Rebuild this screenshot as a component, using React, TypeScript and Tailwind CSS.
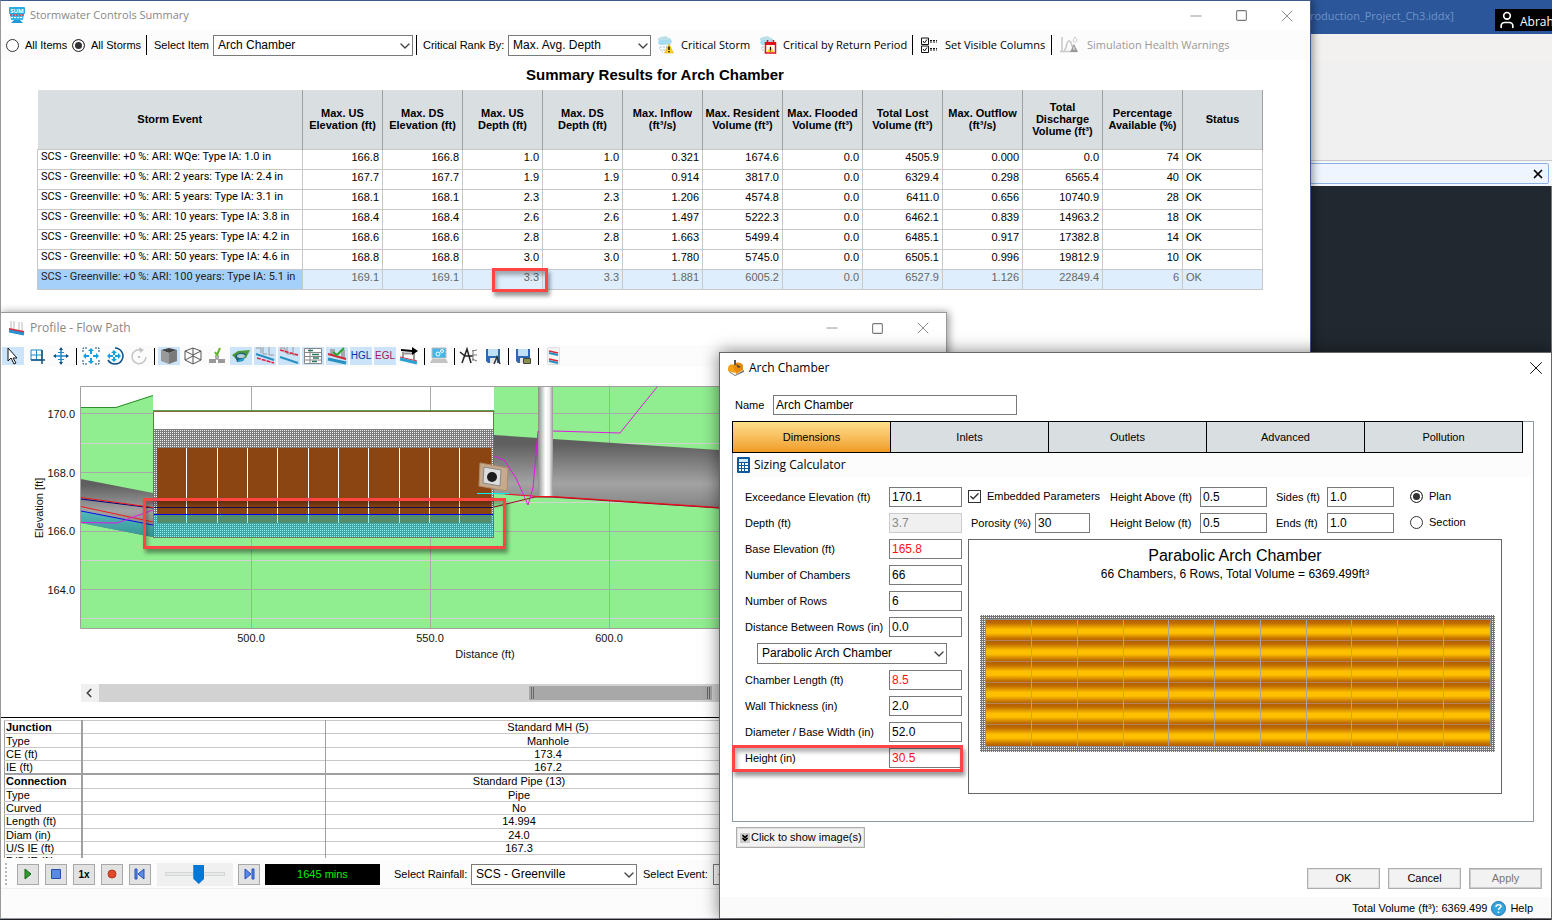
import { ReactNode } from "react";
import { Check, ChevronDown, ChevronLeft, ChevronsDown, Minus, Square, User, X } from "lucide-react";

const columns = [
  "Storm Event",
  "Max. US Elevation (ft)",
  "Max. DS Elevation (ft)",
  "Max. US Depth (ft)",
  "Max. DS Depth (ft)",
  "Max. Inflow (ft³/s)",
  "Max. Resident Volume (ft³)",
  "Max. Flooded Volume (ft³)",
  "Total Lost Volume (ft³)",
  "Max. Outflow (ft³/s)",
  "Total Discharge Volume (ft³)",
  "Percentage Available (%)",
  "Status",
];

const storms = [
  ["SCS - Greenville: +0 %: ARI: WQe: Type IA: 1.0 in", "166.8", "166.8", "1.0", "1.0", "0.321", "1674.6", "0.0", "4505.9", "0.000", "0.0", "74", "OK"],
  ["SCS - Greenville: +0 %: ARI: 2 years: Type IA: 2.4 in", "167.7", "167.7", "1.9", "1.9", "0.914", "3817.0", "0.0", "6329.4", "0.298", "6565.4", "40", "OK"],
  ["SCS - Greenville: +0 %: ARI: 5 years: Type IA: 3.1 in", "168.1", "168.1", "2.3", "2.3", "1.206", "4574.8", "0.0", "6411.0", "0.656", "10740.9", "28", "OK"],
  ["SCS - Greenville: +0 %: ARI: 10 years: Type IA: 3.8 in", "168.4", "168.4", "2.6", "2.6", "1.497", "5222.3", "0.0", "6462.1", "0.839", "14963.2", "18", "OK"],
  ["SCS - Greenville: +0 %: ARI: 25 years: Type IA: 4.2 in", "168.6", "168.6", "2.8", "2.8", "1.663", "5499.4", "0.0", "6485.1", "0.917", "17382.8", "14", "OK"],
  ["SCS - Greenville: +0 %: ARI: 50 years: Type IA: 4.6 in", "168.8", "168.8", "3.0", "3.0", "1.780", "5745.0", "0.0", "6505.1", "0.996", "19812.9", "10", "OK"],
  ["SCS - Greenville: +0 %: ARI: 100 years: Type IA: 5.1 in", "169.1", "169.1", "3.3", "3.3", "1.881", "6005.2", "0.0", "6527.9", "1.126", "22849.4", "6", "OK"],
];

const profileRows = [
  { label: "Junction", value: "Standard MH (5)", head: true, junction: true },
  { label: "Type", value: "Manhole", junction: true },
  { label: "CE (ft)", value: "173.4", junction: true },
  { label: "IE (ft)", value: "167.2", junction: true },
  { label: "Connection", value: "Standard Pipe (13)", head: true },
  { label: "Type", value: "Pipe" },
  { label: "Curved", value: "No" },
  { label: "Length (ft)", value: "14.994" },
  { label: "Diam (in)", value: "24.0" },
  { label: "U/S IE (ft)", value: "167.3" },
  { label: "D/S IE (ft)", value: "" },
];

function WindowButtons() {
  return (
    <div className="flex items-center text-[#777]">
      <button aria-label="Minimize" className="flex w-[46px] justify-center"><Minus size={18} strokeWidth={1} /></button>
      <button aria-label="Maximize" className="flex w-[45px] justify-center"><Square size={13} strokeWidth={2} /></button>
      <button aria-label="Close" className="flex w-[46px] justify-center"><X size={20} strokeWidth={1} /></button>
    </div>
  );
}

function Select({ id, value, className }: { id: string; value: string; className: string }) {
  return (
    <div className={`relative shrink-0 ${className}`}>
      <select id={id} className="block h-[21px] w-full appearance-none border border-[#7a7a7a] bg-white pb-px pl-1 text-[12px] leading-[18px]">
        <option>{value}</option>
      </select>
      <ChevronDown size={16} strokeWidth={2} className="pointer-events-none absolute top-[3px] right-0 text-[#444]" />
    </div>
  );
}

function Radio({ id, name, checked }: { id: string; name: string; checked?: boolean }) {
  return (
    <input
      type="radio"
      id={id}
      name={name}
      defaultChecked={checked}
      className="size-[13px] shrink-0 appearance-none rounded-full border border-[#333] bg-white checked:bg-[#333] checked:shadow-[inset_0_0_0_2px_white]"
    />
  );
}

function Separator() {
  return <div className="h-5 w-px shrink-0 bg-black" />;
}

// Red annotation frame
function Marker({ className }: { className: string }) {
  return (
    <div className={`pointer-events-none absolute border-[3px] border-[#ff4444] shadow-[2px_4px_4px_rgba(0,0,0,0.4),inset_2px_4px_4px_rgba(0,0,0,0.3)] ${className}`} />
  );
}

function StormIcon({ calendar }: { calendar?: boolean }) {
  return (
    <svg width="18" height="18" viewBox="0 0 18 18" className="shrink-0">
      <path d="M3 9a3 3 0 0 1 0-5.5 5 5 0 0 1 8-1.5 3.5 3.5 0 0 1 2 6.5z" fill="#a5dcf2" />
      <path d="M1 4a6 3 0 0 1 11-2l1 2z" fill="#bcdfe8" />
      <path d="M4 10v5M7 10v6M9.5 10v4M2 12h1M5 16h1" stroke="#a9c4cd" strokeDasharray="2 1" />
      {calendar ? (
        <>
          <path d="M6.500 7h10v10h-10z" fill="#fff" stroke="#e01018" strokeWidth="1.500" />
          <path d="M6 6h11v3H6z" fill="#e01018" />
          <path d="M8.500 4v3M14.500 4v3" stroke="#e01018" strokeWidth="1.500" />
          <path d="M11.500 9.500l3.500 6.500H8z" fill="#ffd21f" />
          <path d="M11.500 11v3M11.500 14.500v1" stroke="#111" />
        </>
      ) : (
        <>
          <path d="M12 8l4.500 9h-9z" fill="#ffd21f" stroke="#e2a400" strokeWidth=".5" />
          <path d="M12 10.500v3.500M12 15v1.200" stroke="#111" strokeWidth="1.500" />
        </>
      )}
    </svg>
  );
}

function ColumnsIcon() {
  return (
    <svg width="17" height="17" viewBox="0 0 17 17" fill="none" stroke="#111" className="shrink-0">
      <path d="M.5 1h7v6.500h-7zM.5 9h7v6.500h-7z" />
      <path d="M2 4l1.500 2L6 2.500M2 12l1.500 2L6 10.500" />
      <path d="M9 3.500h7M9 5h7M9 11.500h7M9 13h7" strokeDasharray="2 1" />
    </svg>
  );
}

function HealthIcon() {
  return (
    <svg width="19" height="18" viewBox="0 0 19 18" fill="none" stroke="#c8c8c8" className="shrink-0">
      <path d="M2 1v15M0 15.500h17M4 14c3 0 2-9 5-9s2 4 4 7" strokeWidth="1.500" />
      <path d="M15 1c-3 4-2 5 0 5s3-1 0-5z" />
      <path d="M14 8l4 8h-8z" fill="#999" stroke="none" />
      <path d="M14 11v3" stroke="#fff" />
    </svg>
  );
}

function SummaryWindow() {
  return (
    <section className="absolute top-0 right-[241px] left-0 h-[400px] border border-[#3c5a8c] border-l-[#999] bg-white shadow-[2px_0_8px_rgba(0,0,0,0.4)]">
      <header className="flex h-[29px] items-center justify-between pl-2 font-['Open_Sans',sans-serif] text-[11px] text-[#888]">
        <div className="flex items-center gap-[5px]">
          <svg width="16" height="17" viewBox="0 0 16 17">
            <rect width="16" height="7" rx="1" fill="#29abe2" />
            <text x="8" y="6" fontSize="6" fontWeight="bold" textAnchor="middle" fill="#fff">SUM</text>
            <path d="M1 7h14l-1 6H2z" fill="#3ab6e8" />
            <path d="M1 8h14" stroke="#d8474a" strokeDasharray="2 1" strokeWidth="1.500" />
            <path d="M2 10.500h12" stroke="#fff" strokeDasharray="2 1" />
            <path d="M2 16l3-3h6l3 3z" fill="#1f9bd7" />
          </svg>
          Stormwater Controls Summary
        </div>
        <WindowButtons />
      </header>

      <div className="flex h-[30px] items-center bg-[#fcfcfc] pl-[5px] text-[11px] whitespace-nowrap">
        <Radio id="all-items" name="scope" />
        <label htmlFor="all-items" className="ml-[6px] w-[47px]">All Items</label>
        <Radio id="all-storms" name="scope" checked />
        <label htmlFor="all-storms" className="ml-[6px] w-[55px]">All Storms</label>
        <Separator />
        <label htmlFor="item" className="ml-[7px] w-[59px]">Select Item</label>
        <Select id="item" value="Arch Chamber" className="mr-[3px] w-[200px]" />
        <Separator />
        <label htmlFor="rank" className="ml-[6px] w-[85px]">Critical Rank By:</label>
        <Select id="rank" value="Max. Avg. Depth" className="mr-[6px] w-[143px]" />
        <div className="flex items-center font-['Open_Sans',sans-serif] text-[11px]">
          <button className="flex w-[102px] items-center gap-[6px]"><StormIcon />Critical Storm</button>
          <button className="flex w-[153px] items-center gap-[6px]"><StormIcon calendar />Critical by Return Period</button>
          <Separator />
          <button className="ml-2 flex w-[130px] items-center gap-[7px]"><ColumnsIcon />Set Visible Columns</button>
          <Separator />
          <button disabled className="ml-2 flex items-center gap-2 text-[#999]"><HealthIcon />Simulation Health Warnings</button>
        </div>
      </div>

      <h1 className="flex h-[30px] items-center justify-center pr-[1px] text-[15px] font-bold">Summary Results for Arch Chamber</h1>

      <div className="pr-[47px] pl-9">
        <table className="w-full table-fixed border-collapse text-[11px]">
          <thead>
            <tr className="h-[59px] bg-[#d9dee1]">
              {columns.map((name, i) => (
                <th key={name} className={`border-r border-[#a0a0a0] leading-3 ${i === 0 ? "w-[265px]" : ""} ${i === 6 ? "px-0" : "px-1"}`}>{name}</th>
              ))}
            </tr>
          </thead>
          <tbody>
            {storms.map((row, r) => (
              <tr key={row[0]} className={`h-5 ${r === 6 ? "bg-[#deeefc] text-[#666]" : ""}`}>
                {row.map((cell, i) => (
                  <td
                    key={i}
                    className={`border border-[#c8c8c8] px-[3px] pb-1 leading-[14px] whitespace-nowrap ${i > 0 && i < 12 ? "text-right" : "text-left"} ${i === 0 ? "font-['Roboto',sans-serif]" : ""} ${i === 0 && r === 6 ? "bg-[#a5d0fa] text-[#222]" : ""}`}
                  >
                    {cell}
                  </td>
                ))}
              </tr>
            ))}
          </tbody>
        </table>
      </div>
      <Marker className="top-[267px] left-[491px] h-[24px] w-[56px]" />
    </section>
  );
}

function Tool({ label, active, children }: { label: string; active?: boolean; children: ReactNode }) {
  return (
    <button aria-label={label} className="flex h-[18px] w-6 shrink-0 justify-center">
      <span className={`flex h-[18px] w-[22px] items-center justify-center overflow-hidden ${active ? "bg-[#cce4f9]" : ""}`}>{children}</span>
    </button>
  );
}

function Icon({ children }: { children: ReactNode }) {
  return <svg width="20" height="18" viewBox="0 0 20 18" fill="none">{children}</svg>;
}

function ToolGap() {
  return (
    <div className="flex w-[6px] shrink-0 justify-center">
      <div className="h-[17px] w-px bg-black" />
    </div>
  );
}

// Manholes joined by a pipe, used by several of the profile tools
function PipeGlyph({ pipe, red }: { pipe: string; red: string }) {
  return (
    <Icon>
      <path d="M1 1h5v5M8 0v7h4M14 0v8h5" stroke="#999" />
      <path d={pipe} stroke="#2790bf" strokeWidth="2" />
      <path d={red} stroke="#e0203a" strokeWidth="1.500" strokeDasharray="4 1" />
    </Icon>
  );
}

function SaveGlyph({ children }: { children: ReactNode }) {
  return (
    <Icon>
      <path d="M3 2h14v14H5l-2-2z" fill="#2f67b1" />
      <path d="M5 2h10v7H5z" fill="#bfe0f5" />
      <path d="M7 11h7v5H7z" fill="#e8e8e8" />
      {children}
    </Icon>
  );
}

function ProfileToolbar() {
  return (
    <div className="flex h-[22px] items-center bg-[#fcfcfc]">
      <Tool label="Select" active>
        <Icon><path d="M5 1v13l3-3 3 6 2-1-3-5h4z" fill="#fff" stroke="#111" /></Icon>
      </Tool>
      <Tool label="Zoom window">
        <Icon>
          <path d="M4 3h11v10H4zM9.500 3v10M4 8h11" stroke="#168fc7" />
          <path d="M4 13h14M15 3v14" stroke="#12507f" strokeWidth="1.500" />
        </Icon>
      </Tool>
      <Tool label="Pan">
        <Icon>
          <path d="M10 2v14M3 9h14" stroke="#1988c9" strokeWidth="1.500" />
          <path d="M8 3l2-3 2 3zM8 15l2 3 2-3zM5 7L2 9l3 2zM15 7l3 2-3 2z" fill="#12507f" />
          <path d="M7 5.500h6M7 12.500h6" stroke="#1988c9" />
        </Icon>
      </Tool>
      <ToolGap />
      <Tool label="Zoom extents">
        <Icon>
          <path d="M2 5V1h4M14 1h4v4M18 13v4h-4M6 17H2v-4" stroke="#12507f" strokeDasharray="2 1" />
          <path d="M10 1l3 3h-2v3H9V4H7zM10 17l3-3h-2v-3H9v3H7zM2 9l3-3v2h3v2H5v2zM18 9l-3-3v2h-3v2h3v2z" fill="#169fe0" />
        </Icon>
      </Tool>
      <Tool label="Orbit">
        <Icon>
          <path d="M10 1a8 8 0 1 1-7 12" stroke="#0a4f86" strokeWidth="1.500" />
          <path d="M9 3l3 3h-2v2H8V6H6zM9 15l3-3h-2v-2H8v2H6zM2 9l3-3v2h3v2H5v2zM16 9l-3-3v2h-3v2h3v2z" fill="#169fe0" />
        </Icon>
      </Tool>
      <Tool label="Rotate">
        <Icon>
          <path d="M12 3a7 7 0 1 0 5 7" stroke="#c4c4c4" strokeWidth="1.500" />
          <path d="M10 0l5 3-4 3z" fill="#c4c4c4" />
          <circle cx="10" cy="10" r="1" fill="#aaa" />
        </Icon>
      </Tool>
      <ToolGap />
      <Tool label="Solid" active>
        <Icon>
          <path d="M2 3l8-2 8 2-8 3z" fill="#444" />
          <path d="M2 3l8 3v11l-8-3z" fill="#999" />
          <path d="M18 3l-8 3v11l8-3z" fill="#7a7a7a" />
        </Icon>
      </Tool>
      <Tool label="Wireframe">
        <Icon><path d="M2 4l8-3 8 3v9l-8 4-8-4zM2 4l8 4 8-4M10 1v16M2 13l8-4 8 4" stroke="#555" /></Icon>
      </Tool>
      <Tool label="Ground">
        <Icon>
          <path d="M2 12h7v4H2zM11 12h7v4h-7z" fill="#999" />
          <path d="M8 9h1v3h2V9h1" stroke="#777" />
          <path d="M8 5l2 3 3-7" stroke="#64b32c" strokeWidth="2" />
        </Icon>
      </Tool>
      <Tool label="Terrain" active>
        <Icon>
          <path d="M1 8l6-4 12-1-4 8-9 2z" fill="#4d9a3a" />
          <path d="M4 9c3-4 8-4 11-2l-3 7-6 1z" fill="#1d6178" />
          <ellipse cx="10" cy="9" rx="4" ry="2" fill="#b4ccd4" />
          <path d="M7 14l6-2" stroke="#2aa0d1" strokeWidth="2" />
        </Icon>
      </Tool>
      <Tool label="Flow lines" active><PipeGlyph pipe="M1 7l18 6" red="M2 11l17 5" /></Tool>
      <Tool label="Levels" active><PipeGlyph pipe="M1 10l18 6" red="M1 3l18 5" /></Tool>
      <Tool label="Data grid" active>
        <Icon>
          <path d="M1.500 1.500h17v15h-17zM1 5.500h17M1 9.500h17M1 13h17M7 1v16" stroke="#888" fill="#fff" />
          <path d="M5 3.500h5M9 7.500h7M10 11h6M9 14.500h5" stroke="#277b61" strokeWidth="1.500" />
        </Icon>
      </Tool>
      <Tool label="Check" active>
        <Icon>
          <path d="M3 2h5v6H3zM14 3h4v8h-4z" fill="#a4a8ac" />
          <path d="M1 12l18 4" stroke="#2790bf" strokeWidth="3" />
          <path d="M1 7l18 5" stroke="#cf2834" strokeWidth="2" />
          <path d="M6 5l4 3 7-7" stroke="#28a428" strokeWidth="2" />
        </Icon>
      </Tool>
      <Tool label="HGL" active><span className="text-[10px] leading-none text-[#0a2fa8]">HGL</span></Tool>
      <Tool label="EGL" active><span className="text-[10px] leading-none text-[#a3195b]">EGL</span></Tool>
      <Tool label="Direction">
        <Icon>
          <path d="M4 5v6M15 6v7M4 6.500h11" stroke="#999" strokeWidth="2" />
          <path d="M1 10l17 4" stroke="#d8283c" />
          <path d="M1 12l17 4" stroke="#2da1d2" strokeWidth="3" />
          <path d="M2 2l11 1V0l6 4-6 4V5L2 4z" fill="#000" />
        </Icon>
      </Tool>
      <ToolGap />
      <Tool label="Settings">
        <Icon>
          <path d="M3 1h14v10H3z" fill="#45b6e8" stroke="#bbb" />
          <circle cx="9" cy="7" r="2" stroke="#fff" />
          <circle cx="13" cy="4" r="1.500" stroke="#fff" />
          <path d="M3 12h14l2 4H1z" fill="#c4c4c4" />
        </Icon>
      </Tool>
      <ToolGap />
      <Tool label="Annotate">
        <Icon>
          <path d="M3 16L8 2l4 14M1 5l5 4h8M8 2v3" stroke="#222" strokeWidth="1.500" />
          <path d="M13 4l5-1M13 8h5M13 12l5 2M14 3v11" stroke="#777" />
        </Icon>
      </Tool>
      <Tool label="Save annotations"><SaveGlyph><path d="M11 17l3-7 3 7" stroke="#333" strokeWidth="1.500" /></SaveGlyph></Tool>
      <ToolGap />
      <Tool label="Save image"><SaveGlyph><path d="M10.500 11.500h7v5h-7z" fill="#8a8f4c" stroke="#444" /></SaveGlyph></Tool>
      <ToolGap />
      <Tool label="Profiles">
        <Icon>
          <rect x="4.500" y=".5" width="12" height="17" rx="1" fill="#f4f4f4" stroke="#ddd" />
          <path d="M6 4l9 2M6 12l9 2" stroke="#d8283c" strokeWidth="1.500" />
          <path d="M6 6l9 2M6 14l9 2" stroke="#2790bf" strokeWidth="2" />
        </Icon>
      </Tool>
    </div>
  );
}

const majorLines = [413.5, 472.5, 531.5, 589.5];
const minorLines = [443.5, 502.5, 560.5, 618.5];
const chamberJoints = [186.5, 217.5, 247.5, 277.5, 308.5, 338.5, 368.5, 399.5, 429.5, 459.5];

function ProfileChart() {
  return (
    <svg width="945" height="310" viewBox="1 374 945 310" className="block shrink-0 font-['Liberation_Sans',sans-serif] text-[11px]" fill="none">
      <defs>
        <pattern id="stone" width="4" height="4" patternUnits="userSpaceOnUse">
          <rect width="4" height="4" fill="#7b7b7b" />
          <path d="M0 0h1v1H0zM2 2h1v1H2zM2 0h1v1H2zM0 2h1v1H0z" fill="#f4f4f4" />
        </pattern>
        <pattern id="wetStone" width="4" height="4" patternUnits="userSpaceOnUse">
          <rect width="4" height="4" fill="#3fa3a3" />
          <path d="M0 0h1v1H0zM2 2h1v1H2zM2 0h1v1H2zM0 2h1v1H0z" fill="#8ff3f3" />
        </pattern>
        <linearGradient id="pipe" x1="0" y1="0" x2="0" y2="1">
          <stop offset="0.1" stopColor="#5f5f5f" />
          <stop offset="0.55" stopColor="#a3a3a3" />
          <stop offset="0.75" stopColor="#8d8d8d" />
          <stop offset="1" stopColor="#606060" />
        </linearGradient>
        <linearGradient id="shaft">
          <stop offset="0" stopColor="#8c8c8c" />
          <stop offset="0.5" stopColor="#fff" />
          <stop offset="0.75" stopColor="#f0f0f0" />
          <stop offset="1" stopColor="#969696" />
        </linearGradient>
        <linearGradient id="water" x1="0" y1="0" x2="0" y2="1">
          <stop offset="0" stopColor="#55b9b9" />
          <stop offset="1" stopColor="#369696" />
        </linearGradient>
      </defs>

      {/* ground */}
      <path d="M251.500 387v24M430.500 387v24" stroke="#a9a9a9" />
      <path d="M81 407h35l37-12v233H81zM153 538h341v90H153zM494 387h452v241H494z" fill="#90ee90" />
      <path d="M81 407.500h35l37-12" stroke="#2e8b2e" />
      {majorLines.map((y) => <path key={y} d={`M81 ${y}h72M494 ${y}h452`} stroke="#a9a9a9" />)}
      {minorLines.map((y) => <path key={y} d={`M81 ${y}h72M494 ${y}h452`} stroke="#d3d3d3" />)}
      <path d="M153 589.500h341" stroke="#a9a9a9" />
      <path d="M153 560.500h341M153 618.500h341" stroke="#d3d3d3" />
      <path d="M251.500 538v90M430.500 538v90M609.500 387v241" stroke="#a9a9a9" />

      {/* incoming pipe */}
      <path d="M81 479l72 14v44l-72-14z" fill="url(#pipe)" />
      <path d="M81 511l72 14v12l-72-14z" fill="url(#water)" />
      <path d="M81 499l72 9" stroke="#000080" />
      <path d="M81 497.500l72 10M81 506.500l72 15.500" stroke="#f01818" />
      <path d="M81 511l72 14" stroke="#0a0aee" />

      {/* outgoing pipe and manhole */}
      <path d="M494 435l452 30v58L494 494z" fill="url(#pipe)" />
      <path d="M538 387h15v109h-15z" fill="url(#shaft)" />
      <path d="M494 507l41-10h18l166 11" stroke="#a00028" />
      <path d="M505 494l33 2.500h15l166 11" stroke="#f01018" />

      {/* chamber */}
      <path d="M153 411h341v127H153z" fill="#fff" />
      <path d="M153 429h341v109H153z" fill="url(#stone)" />
      <path d="M157 448h334v75H157z" fill="#8b4513" />
      <path d="M153 523h341v15H153zM153 514h4v10h-4zM491 514h3v10h-3z" fill="url(#wetStone)" />
      <path d="M157 514h334v9H157z" fill="#528d6e" />
      {chamberJoints.map((x) => (
        <g key={x}>
          <path d={`M${x} 448v66`} stroke="#fff" />
          <path d={`M${x} 514v9`} stroke="#8ff3f3" />
        </g>
      ))}
      <path d="M153 507.500h341" stroke="#111158" />
      <path d="M153 514.500h341" stroke="#0000f0" />
      <path d="M153.500 538V411.500h341M493.500 411v127" stroke="#8b6a3a" />
      <path d="M153 410.500h341" stroke="#55a055" />
      <path d="M153 537.500h341" stroke="#6b7b63" />

      <path d="M81 522.500l36 .5 36-13M494 456l10 4 12 18 12 27 5-17 5-57M553 431l67 2 37-46" stroke="#e516e5" />
      <path d="M477 493.500h32" stroke="#00f0f0" />

      {/* outlet control */}
      <path d="M480 463l28 5-1 23-28-5z" fill="#c7a98c" stroke="#b08c6b" />
      <path d="M484 467l17 3-1 16-17-3z" fill="#ddd" stroke="#888" />
      <ellipse cx="492" cy="477" rx="5" ry="5" fill="#1c1c1c" />

      <path d="M946 386.500H80.500v242H946" stroke="#a0a0a0" />

      <g fill="#111" textAnchor="end">
        <text x="75" y="418">170.0</text>
        <text x="75" y="477">168.0</text>
        <text x="75" y="535">166.0</text>
        <text x="75" y="594">164.0</text>
      </g>
      <g fill="#111" textAnchor="middle">
        <text x="251" y="642">500.0</text>
        <text x="430" y="642">550.0</text>
        <text x="609" y="642">600.0</text>
        <text x="485" y="658">Distance (ft)</text>
        <text transform="translate(43 508) rotate(-90)">Elevation [ft]</text>
      </g>
    </svg>
  );
}

function PlayButton({ label, children }: { label: string; children: ReactNode }) {
  return (
    <button aria-label={label} className="flex h-[21px] w-[22px] shrink-0 items-center justify-center border border-[#a8a8a8] bg-[#e2e2e2] text-[10px] font-bold">
      {children}
    </button>
  );
}

function Playback() {
  return (
    <div className="flex h-[29px] items-center border-b border-[#eee] bg-[#fcfcfc] pl-1 text-[11px] whitespace-nowrap">
      <div className="mr-[10px] h-[22px] border-l-2 border-dotted border-[#b8b8b8]" />
      <div className="mr-[6px] flex gap-[6px]">
        <PlayButton label="Play"><svg width="12" height="12"><path d="M3 1l6 5-6 5z" fill="#2f9a2f" stroke="#176517" /></svg></PlayButton>
        <PlayButton label="Stop"><svg width="10" height="10"><path d="M.5.5h9v9h-9z" fill="#5b8be0" stroke="#2350b0" /></svg></PlayButton>
        <PlayButton label="Speed">1x</PlayButton>
        <PlayButton label="Record"><svg width="10" height="10"><circle cx="5" cy="5" r="4" fill="#e0492a" stroke="#b03a20" /></svg></PlayButton>
        <PlayButton label="First"><svg width="12" height="12"><path d="M1 1h2v10H1zM10 1v10L4 6z" fill="#5b8be0" stroke="#2350c0" /></svg></PlayButton>
      </div>
      <div className="flex h-[23px] w-[76px] shrink-0 items-center bg-[#f0f0f0] px-2">
        <input
          type="range"
          aria-label="Time"
          defaultValue={58}
          className="h-5 w-full appearance-none bg-transparent [&::-webkit-slider-runnable-track]:h-1 [&::-webkit-slider-runnable-track]:border [&::-webkit-slider-runnable-track]:border-[#d6d6d6] [&::-webkit-slider-runnable-track]:bg-[#e7eaea] [&::-webkit-slider-thumb]:-mt-2 [&::-webkit-slider-thumb]:h-[19px] [&::-webkit-slider-thumb]:w-[11px] [&::-webkit-slider-thumb]:appearance-none [&::-webkit-slider-thumb]:bg-[#0078d7] [&::-webkit-slider-thumb]:[clip-path:polygon(0_0,100%_0,100%_72%,50%_100%,0_72%)]"
        />
      </div>
      <div className="mr-[5px] ml-[5px]">
        <PlayButton label="Last"><svg width="12" height="12"><path d="M9 1h2v10H9zM2 1v10l6-5z" fill="#5b8be0" stroke="#2350c0" /></svg></PlayButton>
      </div>
      <output className="flex h-[21px] w-[115px] shrink-0 items-center justify-center bg-black text-[#00f000]">1645 mins</output>
      <label htmlFor="rainfall" className="ml-[14px] w-[77px]">Select Rainfall:</label>
      <Select id="rainfall" value="SCS - Greenville" className="w-[166px]" />
      <label htmlFor="event" className="ml-[6px] w-[70px]">Select Event:</label>
      <Select id="event" value="- - -" className="w-[180px]" />
    </div>
  );
}

function ProfileWindow() {
  return (
    <section className="absolute top-[312px] bottom-px left-0 flex w-[947px] flex-col overflow-hidden border border-[#999] bg-white shadow-[2px_0_8px_rgba(0,0,0,0.4)]">
      <header className="flex h-[30px] shrink-0 items-center justify-between pl-2 font-['Open_Sans',sans-serif] text-[12px] text-[#888]">
        <div className="flex items-center gap-[5px]">
          <svg width="16" height="16" viewBox="0 0 16 16" fill="none">
            <path d="M2 1v8M5 1v8M10 2v8M13 2v9" stroke="#bbb" />
            <path d="M0 9l15 3" stroke="#d8283c" strokeWidth="2" />
            <path d="M0 11l15 3" stroke="#2790cf" strokeWidth="3" />
          </svg>
          Profile - Flow Path
        </div>
        <WindowButtons />
      </header>
      <div className="pt-[2px] pb-[7px]"><ProfileToolbar /></div>
      <ProfileChart />
      <div className="ml-20 flex h-[18px] shrink-0 bg-[#d2d2d2]">
        <button aria-label="Scroll left" className="flex w-[18px] items-center bg-[#f0f0f0] pl-px"><ChevronLeft size={14} strokeWidth={3} className="text-[#444]" /></button>
        <div className="my-[2px] ml-[430px] flex w-[183px] justify-between bg-[#a8a8a8] px-[2px] py-px">
          <div className="w-[3px] border-x border-[#666]" />
          <div className="w-[3px] border-x border-[#666]" />
        </div>
      </div>
      <div className="mt-[15px] h-[141px] shrink-0 overflow-hidden border-t border-black pt-[2px] pl-[3px]">
        <table className="w-[767px] table-fixed border-collapse border border-[#a0a0a0] text-[11px]">
          <tbody>
            {profileRows.map((row, i) => (
              <tr
                key={i}
                className={`${i % 3 === 1 ? "h-[14px]" : "h-[13px]"} ${row.head && i > 0 ? "border-t-2 border-[#a0a0a0]" : "border-t border-[#c8c8c8]"}`}
              >
                <th className={`w-[77px] border-r-2 border-r-[#a0a0a0] p-0 pl-px text-left leading-3 ${row.head ? "font-bold" : "font-normal"}`}>{row.label}</th>
                <td className="w-[244px] border-r border-r-[#a0a0a0] p-0" />
                <td className={`p-0 text-center leading-3 ${row.junction ? "" : "pr-[58px]"}`}>{row.value}</td>
              </tr>
            ))}
          </tbody>
        </table>
      </div>
      <div className="mt-[2px] flex-1 bg-[#fcfcfc]"><Playback /></div>
      <Marker className="top-[185px] left-[142px] h-[51px] w-[363px]" />
    </section>
  );
}

function Field({ id, label, value, labelClass, inputClass, disabled }: { id: string; label: string; value: string; labelClass: string; inputClass: string; disabled?: boolean }) {
  return (
    <div className="flex h-5 items-center">
      <label htmlFor={id} className={`shrink-0 whitespace-nowrap ${labelClass}`}>{label}</label>
      <input
        id={id}
        defaultValue={value}
        disabled={disabled}
        className={`h-5 border border-[#7a7a7a] px-[2px] text-[12px] disabled:border-[#ccc] disabled:bg-[#f0f0f0] disabled:text-[#888] ${inputClass}`}
      />
    </div>
  );
}

function ChamberPlan() {
  return (
    <svg width="515" height="137" viewBox="0 0 515 137">
      <defs>
        <pattern id="planStone" width="4" height="4" patternUnits="userSpaceOnUse">
          <rect width="4" height="4" fill="#747474" />
          <path d="M0 0h1v1H0zM2 2h1v1H2zM2 0h1v1H2zM0 2h1v1H0z" fill="#f4f4f4" />
        </pattern>
        <linearGradient id="arch" x1="0" y1="0" x2="0" y2="1">
          <stop offset="0" stopColor="#b35f00" />
          <stop offset="0.15" stopColor="#bf6d00" />
          <stop offset="0.45" stopColor="#ffc000" />
          <stop offset="0.62" stopColor="#ffc000" />
          <stop offset="0.9" stopColor="#bf6d00" />
          <stop offset="1" stopColor="#b35f00" />
        </linearGradient>
      </defs>
      <rect width="515" height="137" fill="url(#planStone)" />
      {[0, 1, 2, 3, 4, 5].map((r) => (
        <rect key={r} x="6" y={5 + r * 21} width="504" height="21" fill="url(#arch)" />
      ))}
      {[1, 2, 3, 4, 5].map((r) => <path key={r} d={`M6 ${4.5 + r * 21}h504`} stroke="#b3835a" />)}
      {[46, 92, 138, 183, 229, 275, 321, 366, 412, 458].map((x) => <path key={x} d={`M${x + 5.5} 5v126`} stroke="#a9a39a" />)}
      <rect x="5.500" y="4.500" width="505" height="127" fill="none" stroke="#909090" />
    </svg>
  );
}

function DialogButton({ children, disabled }: { children: ReactNode; disabled?: boolean }) {
  return (
    <button disabled={disabled} className="h-[21px] w-[73px] border border-[#adadad] bg-[#f2f2f2] text-[11px] ring-1 ring-[#e1e1e1] ring-inset disabled:text-[#777] disabled:ring-[#ccc]">
      {children}
    </button>
  );
}

const leftLabel = "w-[144px]";
const leftInput = "w-[73px]";
const redInput = "w-[73px] text-[#ff1010]";

function ArchChamberDialog() {
  return (
    <section className="absolute top-[352px] right-0 bottom-px left-[719px] flex flex-col border border-[#666] bg-white text-[11px] shadow-[0_0_16px_rgba(0,0,0,0.5)]">
      <header className="flex h-[30px] shrink-0 items-center justify-between pr-1 pl-2 font-['Open_Sans',sans-serif] text-[12px]">
        <div className="flex items-center gap-[5px]">
          <svg width="16" height="16" viewBox="0 0 16 16">
            <path d="M1 11l6 4 9-5v2l-9 4-6-4z" fill="#777" />
            <path d="M0 8c1-4 4-5 7-2v7L0 11z" fill="#f5a21b" />
            <path d="M5 6c1-4 7-5 10-1v5l-7 4z" fill="#e88a0c" />
            <path d="M8 4l5 3-3 1z" fill="#543" />
            <path d="M6 0h2v5H6z" fill="#555" />
          </svg>
          Arch Chamber
        </div>
        <button aria-label="Close"><X size={22} strokeWidth={1} /></button>
      </header>

      <div className="mt-3 pl-[15px]">
        <Field id="name" label="Name" value="Arch Chamber" labelClass="w-[38px]" inputClass="w-[244px]" />
      </div>

      <div className="mt-[6px] mr-[17px] ml-3 flex h-[401px] shrink-0 flex-col border border-[#8c9aa3]">
        <div role="tablist" className="-mt-px -ml-px mr-[10px] flex h-8 shrink-0 border border-black text-[11px]">
          {["Dimensions", "Inlets", "Outlets", "Advanced", "Pollution"].map((tab, i) => (
            <button
              key={tab}
              role="tab"
              aria-selected={i === 0}
              className={`flex-1 border-black not-last:border-r ${i === 0 ? "bg-linear-to-b from-[#fde08a] to-[#ef9c20]" : "bg-[#d9dee1]"}`}
            >
              {tab}
            </button>
          ))}
        </div>
        <button className="flex h-6 w-full shrink-0 items-center gap-1 bg-[#fcfcfc] pl-1 font-['Open_Sans',sans-serif] text-[12px]">
          <svg width="13" height="16" viewBox="0 0 13 16">
            <rect width="13" height="16" rx="1" fill="#12579b" />
            <path d="M2 2h9v3H2z" fill="#cfeafb" />
            <path d="M2 6h2v2H2zM5 6h2v2H5zM8 6h3v2H8zM2 9h2v2H2zM5 9h2v2H5zM8 9h3v2H8zM2 12h2v2H2zM5 12h2v2H5zM8 12h3v2H8z" fill="#fff" />
          </svg>
          Sizing Calculator
        </button>

        <div className="flex gap-[6px] pt-[10px] pl-3">
          <div className="flex flex-col gap-[6px]">
            <Field id="exceedance" label="Exceedance Elevation (ft)" value="170.1" labelClass={leftLabel} inputClass={leftInput} />
            <Field id="depth" label="Depth (ft)" value="3.7" labelClass={leftLabel} inputClass={leftInput} disabled />
            <Field id="base" label="Base Elevation (ft)" value="165.8" labelClass={leftLabel} inputClass={redInput} />
            <Field id="chambers" label="Number of Chambers" value="66" labelClass={leftLabel} inputClass={leftInput} />
            <Field id="rows" label="Number of Rows" value="6" labelClass={leftLabel} inputClass={leftInput} />
            <Field id="distance" label="Distance Between Rows (in)" value="0.0" labelClass={leftLabel} inputClass={leftInput} />
            <div className="ml-3">
              <Select id="shape" value="Parabolic Arch Chamber" className="w-[190px]" />
            </div>
            <Field id="length" label="Chamber Length (ft)" value="8.5" labelClass={leftLabel} inputClass={redInput} />
            <Field id="wall" label="Wall Thickness (in)" value="2.0" labelClass={leftLabel} inputClass={leftInput} />
            <Field id="diameter" label="Diameter / Base Width (in)" value="52.0" labelClass={leftLabel} inputClass={leftInput} />
            <Field id="height" label="Height (in)" value="30.5" labelClass={leftLabel} inputClass={redInput} />
          </div>

          <div className="flex flex-col gap-[6px]">
            <div className="flex h-[46px]">
              <div className="flex w-[142px] flex-col gap-[6px]">
                <div className="flex h-[18px] items-center gap-[6px]">
                  <div className="relative">
                    <input type="checkbox" id="embedded" defaultChecked className="block size-[13px] appearance-none border border-[#333] bg-white" />
                    <Check size={11} strokeWidth={3} className="pointer-events-none absolute top-px left-px text-[#333]" />
                  </div>
                  <label htmlFor="embedded" className="whitespace-nowrap">Embedded Parameters</label>
                </div>
                <div className="pt-[2px] pl-[3px]">
                  <Field id="porosity" label="Porosity (%)" value="30" labelClass="w-[64px]" inputClass="w-[55px]" />
                </div>
              </div>
              <div className="flex w-[166px] flex-col gap-[6px]">
                <Field id="above" label="Height Above (ft)" value="0.5" labelClass="w-[90px]" inputClass="w-[67px]" />
                <Field id="below" label="Height Below (ft)" value="0.5" labelClass="w-[90px]" inputClass="w-[67px]" />
              </div>
              <div className="flex w-[134px] flex-col gap-[6px]">
                <Field id="sides" label="Sides (ft)" value="1.0" labelClass="w-[51px]" inputClass="w-[67px]" />
                <Field id="ends" label="Ends (ft)" value="1.0" labelClass="w-[51px]" inputClass="w-[67px]" />
              </div>
              <div className="flex flex-col gap-2">
                <div className="flex h-[18px] items-center gap-[6px]"><Radio id="plan" name="view" checked /><label htmlFor="plan">Plan</label></div>
                <div className="flex h-[18px] items-center gap-[6px]"><Radio id="section" name="view" /><label htmlFor="section">Section</label></div>
              </div>
            </div>
            <div className="flex h-[255px] w-[534px] flex-col items-center border border-[#666] pt-[6px]">
              <h2 className="text-[16px] leading-5">Parabolic Arch Chamber</h2>
              <p className="mb-[33px] text-[12px] leading-4">66 Chambers, 6 Rows, Total Volume = 6369.499ft³</p>
              <div className="pl-1">
                <ChamberPlan />
              </div>
            </div>
          </div>
        </div>
      </div>

      <button className="mt-[5px] ml-4 flex h-[21px] w-[129px] shrink-0 items-center gap-px border border-[#adadad] bg-[#f2f2f2] pl-[3px] whitespace-nowrap ring-1 ring-[#e1e1e1] ring-inset">
        <ChevronsDown size={10} strokeWidth={4} className="bg-[#ccc]" />
        Click to show image(s)
      </button>

      <div className="mt-5 flex justify-end gap-2 pr-[9px]">
        <DialogButton>OK</DialogButton>
        <DialogButton>Cancel</DialogButton>
        <DialogButton disabled>Apply</DialogButton>
      </div>

      <footer className="mt-2 flex flex-1 items-center justify-end gap-1 bg-[#fafafa] pt-[2px] pr-[18px]">
        Total Volume (ft³): 6369.499
        <a href="#help" className="flex items-center gap-1">
          <svg width="15" height="15" viewBox="0 0 15 15">
            <circle cx="7.500" cy="7.500" r="7" fill="#35a3dc" stroke="#1d78b0" />
            <path d="M5 6c0-3 5-3 5-.5C10 7 7.500 7 7.500 9M7.500 10.500v1.500" fill="none" stroke="#fff" strokeWidth="1.500" />
          </svg>
          Help
        </a>
      </footer>
      <Marker className="top-[392px] left-[12px] h-[27px] w-[231px]" />
    </section>
  );
}

export default function App() {
  return (
    <main className="relative h-screen min-h-[920px] overflow-hidden bg-[#1d242b] font-['Liberation_Sans',sans-serif] text-black">
      {/* main application behind the floating windows */}
      <div className="flex h-[34px] justify-end bg-[#2b579a] pl-[1310px] font-['Open_Sans',sans-serif] text-[11px]">
        <span className="flex-1 pt-2 text-[#6e93c8]">roduction_Project_Ch3.iddx]</span>
        <div className="mt-[9px] flex h-[22px] w-[57px] items-center gap-[3px] overflow-hidden bg-black pl-[2px] text-[12px] text-white">
          <User size={20} strokeWidth={2} className="shrink-0" />
          <span className="pt-[3px]">Abrah</span>
        </div>
      </div>
      <div className="h-[26px] bg-[#f3f1ef]" />
      <div className="h-[100px] bg-[#f0f0f0]" />
      <div className="border-t border-[#c8c8c8] bg-[#f4f8fd] pt-[2px] pr-[3px] pb-[2px]">
        <div className="flex h-[21px] items-center justify-end rounded-xs border border-[#8cb2e4] bg-[#eef5fe] pr-[3px]">
          <button aria-label="Close panel"><X size={14} strokeWidth={3} /></button>
        </div>
      </div>
      <div className="h-full border-r border-[#777] bg-[#212830]" />

      <SummaryWindow />
      <ProfileWindow />
      <ArchChamberDialog />
    </main>
  );
}
